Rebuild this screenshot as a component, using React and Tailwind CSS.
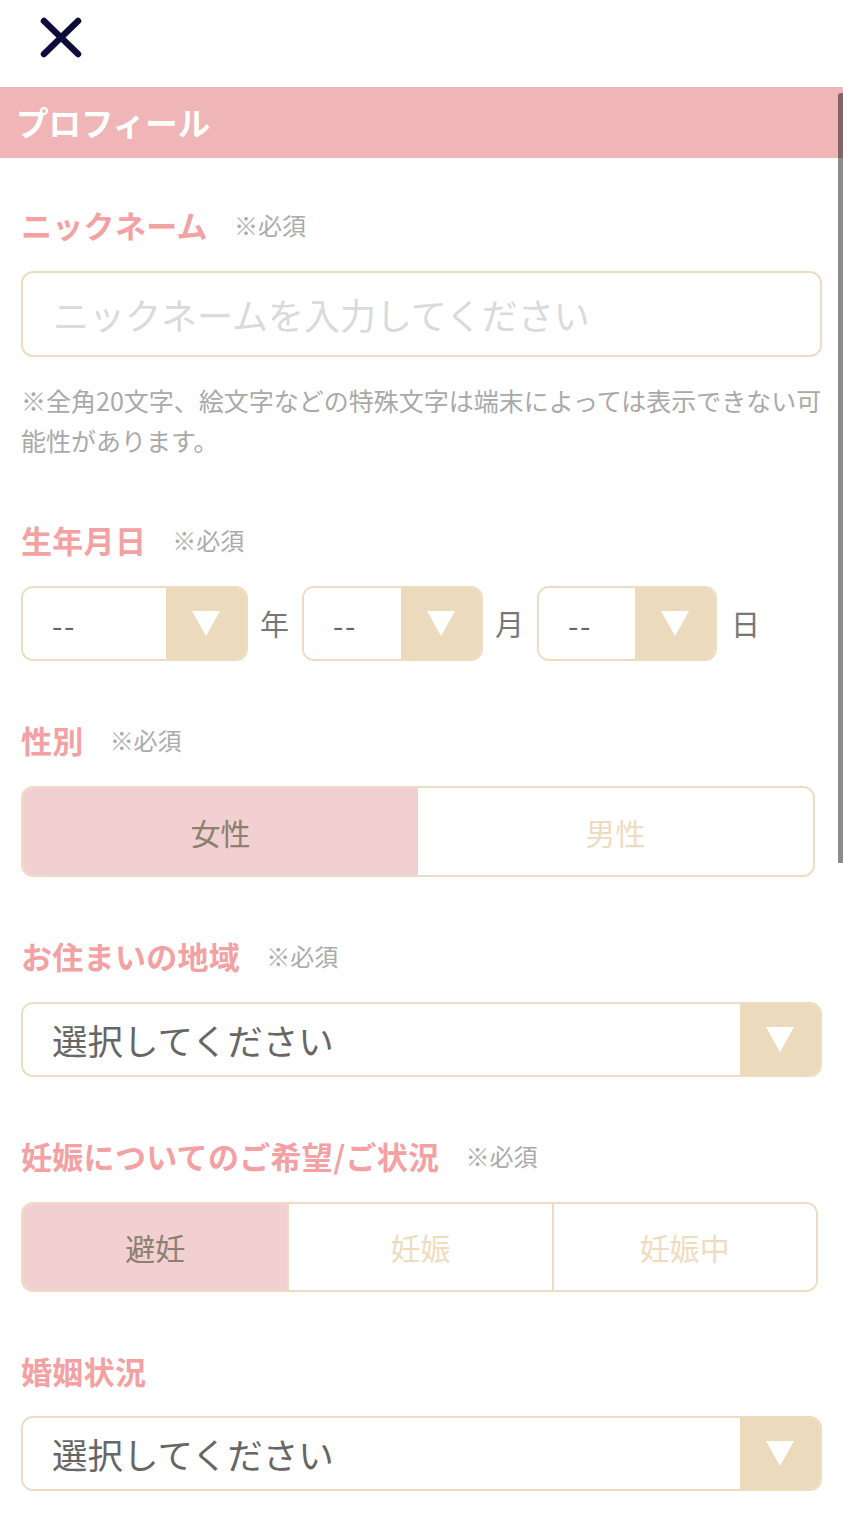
import React from "react";

const FONT = { fontFamily: '"Noto Sans CJK JP", "Noto Sans", sans-serif' };

function Tri() {
  return (
    <svg width="28" height="25" viewBox="0 0 28 25">
      <polygon points="0,0 28,0 14,25" fill="#ffffff" />
    </svg>
  );
}

function Label({ text, required = true }) {
  return (
    <div className="flex items-center h-[40px] pb-[3px]">
      <span className="text-[31px] font-bold text-[#f3a1a3] leading-none tracking-[0.01em]">{text}</span>
      {required && (
        <span className="ml-[26px] text-[24px] text-[#ababab] leading-none">※必須</span>
      )}
    </div>
  );
}

function DateBox({ w }) {
  return (
    <div
      className="flex h-[75px] rounded-[12px] border-2 border-[#eedcc0] overflow-hidden shrink-0"
      style={{ width: w }}
    >
      <div className="flex-1 bg-white flex items-center pl-[29px] text-[30px] text-[#666] leading-none tracking-[0.05em]">--</div>
      <div className="w-[80px] bg-[#ecdabd] flex items-center justify-center">
        <Tri />
      </div>
    </div>
  );
}

function Select() {
  return (
    <div className="flex w-[801px] h-[75px] rounded-[12px] border-2 border-[#eedcc0] overflow-hidden">
      <div className="flex-1 bg-white flex items-center pl-[29px] text-[35.5px] text-[#666] leading-none">
        選択してください
      </div>
      <div className="w-[80px] bg-[#ecdabd] flex items-center justify-center">
        <Tri />
      </div>
    </div>
  );
}

export default function App() {
  return (
    <div className="relative w-[843px] h-[1513px] bg-white overflow-hidden" style={FONT}>
      {/* top bar */}
      <div className="h-[87px] pl-[40px] pt-[17px]">
        <svg width="42" height="41" viewBox="0 0 42 41">
          <path d="M4 4 L38 37 M38 4 L4 37" stroke="#0c0b3a" strokeWidth="6.5" strokeLinecap="round" />
        </svg>
      </div>
      <div className="h-[71px] bg-[#f0b5b7] flex items-center pl-[16px]">
        <span className="text-[32.5px] font-bold text-white leading-none">プロフィール</span>
      </div>

      <div className="px-[21px] pt-[48px]">
        {/* nickname */}
        <Label text="ニックネーム" />
        <div className="mt-[25px] w-[801px] h-[86px] rounded-[12px] border-2 border-[#eedcc0] flex items-center pl-[30px] text-[36px] text-[#dadada] leading-none">
          ニックネームを入力してください
        </div>
        <div className="mt-[23px] text-[25px] leading-[40px] text-[#a9a9a9] whitespace-nowrap">
          ※全角20文字、絵文字などの特殊文字は端末によっては表示できない可
          <br />
          能性があります。
        </div>

        {/* birthday */}
        <div className="mt-[61px]">
          <Label text="生年月日" />
          <div className="mt-[25px] flex items-center">
            <DateBox w={227} />
            <span className="ml-[12px] mr-[13px] text-[29px] text-[#777] leading-none">年</span>
            <DateBox w={181} />
            <span className="ml-[12px] mr-[13px] text-[29px] text-[#777] leading-none">月</span>
            <DateBox w={180} />
            <span className="ml-[14px] text-[29px] text-[#777] leading-none">日</span>
          </div>
        </div>

        {/* gender */}
        <div className="mt-[60px]">
          <Label text="性別" />
          <div className="mt-[25px] flex w-[794px] h-[91px] rounded-[12px] border-2 border-[#eedcc0] overflow-hidden">
            <div className="w-[395px] bg-[#f2cfd1] flex items-center justify-center text-[30px] text-[#8c8070] leading-none">
              女性
            </div>
            <div className="flex-1 bg-white flex items-center justify-center text-[30px] text-[#efdcbf] leading-none">
              男性
            </div>
          </div>
        </div>

        {/* area */}
        <div className="mt-[60px]">
          <Label text="お住まいの地域" />
          <div className="mt-[25px]">
            <Select />
          </div>
        </div>

        {/* pregnancy */}
        <div className="mt-[60px]">
          <Label text="妊娠についてのご希望/ご状況" />
          <div className="mt-[25px] grid grid-cols-3 w-[797px] h-[90px] rounded-[12px] border-2 border-[#eedcc0] overflow-hidden">
            <div className="bg-[#f2cfd1] flex items-center justify-center text-[30px] text-[#8c8070] leading-none">
              避妊
            </div>
            <div className="bg-white border-l-2 border-[#eedcc0] flex items-center justify-center text-[30px] text-[#efdcbf] leading-none">
              妊娠
            </div>
            <div className="bg-white border-l-2 border-[#eedcc0] flex items-center justify-center text-[30px] text-[#efdcbf] leading-none">
              妊娠中
            </div>
          </div>
        </div>

        {/* marital */}
        <div className="mt-[60px]">
          <Label text="婚姻状況" required={false} />
          <div className="mt-[24px]">
            <Select />
          </div>
        </div>
      </div>

      {/* scrollbar overlay */}
      <div className="absolute right-0 top-[93px] w-[5px] h-[770px] bg-black/45 rounded-tl-[3px]" />
    </div>
  );
}
